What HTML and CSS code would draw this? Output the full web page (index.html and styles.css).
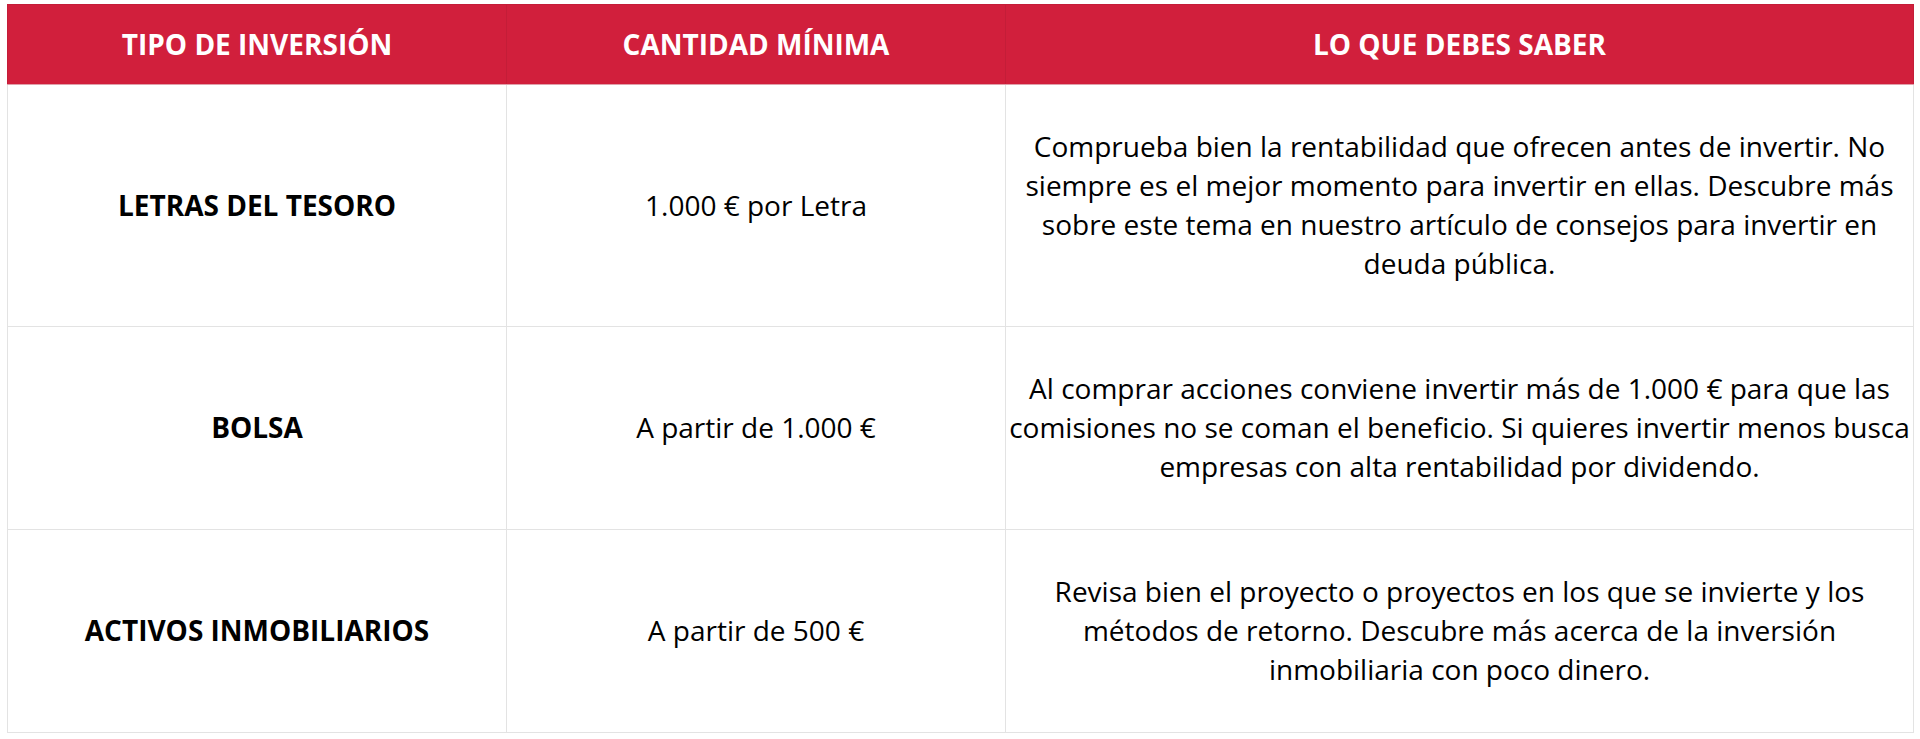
FILE: index.html
```html
<!DOCTYPE html>
<html lang="es">
<head>
<meta charset="utf-8">
<title>Tipos de inversión</title>
<link rel="stylesheet" href="styles.css">
</head>
<body>
<div class="wrap">
<table class="inv">
  <colgroup>
    <col class="c1">
    <col class="c2">
    <col class="c3">
  </colgroup>
  <thead>
    <tr>
      <th>TIPO DE INVERSIÓN</th>
      <th>CANTIDAD MÍNIMA</th>
      <th>LO QUE DEBES SABER</th>
    </tr>
  </thead>
  <tbody>
    <tr>
      <td class="name">LETRAS DEL TESORO</td>
      <td>1.000 € por Letra</td>
      <td>Comprueba bien la rentabilidad que ofrecen antes de invertir. No siempre es el mejor momento para invertir en ellas. Descubre más sobre este tema en nuestro artículo de consejos para invertir en deuda pública.</td>
    </tr>
    <tr>
      <td class="name">BOLSA</td>
      <td>A partir de 1.000 €</td>
      <td>Al comprar acciones conviene invertir más de 1.000 € para que las comisiones no se coman el beneficio. Si quieres invertir menos busca empresas con alta rentabilidad por dividendo.</td>
    </tr>
    <tr>
      <td class="name">ACTIVOS INMOBILIARIOS</td>
      <td>A partir de 500 €</td>
      <td>Revisa bien el proyecto o proyectos en los que se invierte y los métodos de retorno. Descubre más acerca de la inversión inmobiliaria con poco dinero.</td>
    </tr>
  </tbody>
</table>
</div>
</body>
</html>
```
FILE: styles.css
```css
* { box-sizing: border-box; }
html, body { margin: 0; padding: 0; background: #ffffff; }
body {
  font-family: "Open Sans", "Noto Sans", "Liberation Sans", sans-serif;
  color: #000000;
}
.wrap {
  padding: 4px 7px;
}
.inv {
  width: 1906px;
  border-collapse: collapse;
  table-layout: fixed;
}
.c1 { width: 499px; }
.c2 { width: 499px; }
.c3 { width: 908px; }
.inv th {
  background: #d11f3c;
  color: #ffffff;
  font-weight: 700;
  font-size: 28px;
  line-height: 39px;
  padding: 20px 0;
  text-align: center;
  border: 1px solid #c41d38;
  border-bottom: 1px solid #e0a0aa;
}
.inv td {
  font-size: 28px;
  line-height: 39px;
  padding: 42px 0 43px;
  text-align: center;
  vertical-align: middle;
  border: 1px solid #e3e3e3;
}
.inv td.name {
  font-weight: 700;
}
```
